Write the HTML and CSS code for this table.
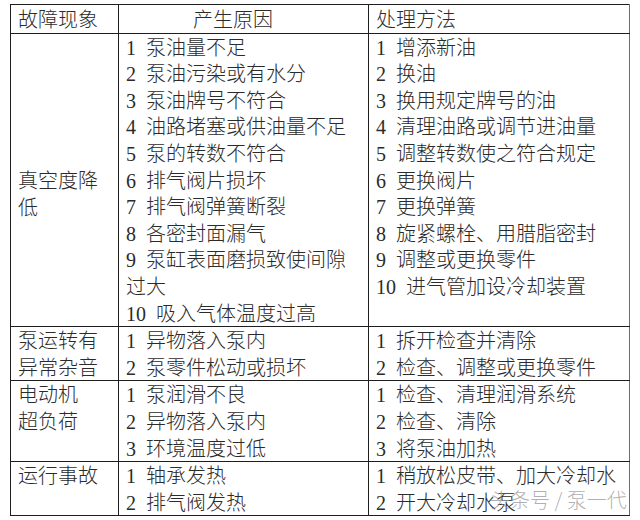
FILE: index.html
```html
<!DOCTYPE html>
<html lang="zh-CN">
<head>
<meta charset="utf-8">
<title>故障现象</title>
<link rel="stylesheet" href="styles.css">
</head>
<body>
<div class="sheet">
  <table class="faults">
    <colgroup>
      <col class="c1">
      <col class="c2">
      <col class="c3">
    </colgroup>
    <thead>
      <tr>
        <th class="h1">故障现象</th>
        <th class="h2">产生原因</th>
        <th class="h3">处理方法</th>
      </tr>
    </thead>
    <tbody>
      <tr>
        <td class="sym mid">真空度降<br>低</td>
        <td>
          <div><span class="n">1</span>泵油量不足</div>
          <div><span class="n">2</span>泵油污染或有水分</div>
          <div><span class="n">3</span>泵油牌号不符合</div>
          <div><span class="n">4</span>油路堵塞或供油量不足</div>
          <div><span class="n">5</span>泵的转数不符合</div>
          <div><span class="n">6</span>排气阀片损坏</div>
          <div><span class="n">7</span>排气阀弹簧断裂</div>
          <div><span class="n">8</span>各密封面漏气</div>
          <div><span class="n">9</span>泵缸表面磨损致使间隙<br>过大</div>
          <div><span class="n">10</span>吸入气体温度过高</div>
        </td>
        <td>
          <div><span class="n">1</span>增添新油</div>
          <div><span class="n">2</span>换油</div>
          <div><span class="n">3</span>换用规定牌号的油</div>
          <div><span class="n">4</span>清理油路或调节进油量</div>
          <div><span class="n">5</span>调整转数使之符合规定</div>
          <div><span class="n">6</span>更换阀片</div>
          <div><span class="n">7</span>更换弹簧</div>
          <div><span class="n">8</span>旋紧螺栓、用腊脂密封</div>
          <div><span class="n">9</span>调整或更换零件</div>
          <div><span class="n">10</span>进气管加设冷却装置</div>
        </td>
      </tr>
      <tr>
        <td class="sym">泵运转有<br>异常杂音</td>
        <td>
          <div><span class="n">1</span>异物落入泵内</div>
          <div><span class="n">2</span>泵零件松动或损坏</div>
        </td>
        <td>
          <div><span class="n">1</span>拆开检查并清除</div>
          <div><span class="n">2</span>检查、调整或更换零件</div>
        </td>
      </tr>
      <tr>
        <td class="sym">电动机<br>超负荷</td>
        <td>
          <div><span class="n">1</span>泵润滑不良</div>
          <div><span class="n">2</span>异物落入泵内</div>
          <div><span class="n">3</span>环境温度过低</div>
        </td>
        <td>
          <div><span class="n">1</span>检查、清理润滑系统</div>
          <div><span class="n">2</span>检查、清除</div>
          <div><span class="n">3</span>将泵油加热</div>
        </td>
      </tr>
      <tr>
        <td class="sym">运行事故</td>
        <td>
          <div><span class="n">1</span>轴承发热</div>
          <div><span class="n">2</span>排气阀发热</div>
        </td>
        <td>
          <div><span class="n">1</span>稍放松皮带、加大冷却水</div>
          <div><span class="n">2</span>开大冷却水泵</div>
        </td>
      </tr>
    </tbody>
  </table>
  <div class="watermark">头条号 / 泵一代</div>
</div>
</body>
</html>
```

FILE: styles.css
```css
html, body {
  margin: 0;
  padding: 0;
  background: #ffffff;
}

body {
  font-family: "Noto Sans CJK SC", "Noto Sans", sans-serif;
  font-weight: 300;
  font-size: 20px;
  color: #2b2b2b;
}

.sheet {
  position: relative;
  padding: 4px 0 0 10px;
  width: 620px;
}

.faults {
  border-collapse: collapse;
  table-layout: fixed;
  width: 619px;
}

.c1 { width: 108px; }
.c2 { width: 250px; }
.c3 { width: 261px; }

.faults th,
.faults td {
  border: 1px solid #1e1e1e;
  padding: 0 4px 0 7px;
  line-height: 26.6px;
  text-align: left;
  vertical-align: top;
  white-space: nowrap;
  font-weight: 300;
}

.faults th {
  padding-top: 1px;
}

.faults tr > :last-child {
  border-right-color: #6e6e6e;
}

.faults .h2 {
  padding-left: 74px;
}

.faults .mid {
  vertical-align: middle;
  padding-top: 28px;
}

.faults td div {
  height: 26.6px;
}

.faults td div:has(br) {
  height: 53.2px;
}

.n {
  font-family: "Liberation Serif", serif;
  font-weight: 400;
  display: inline-block;
  padding-right: 10px;
  line-height: 20px;
}

.watermark {
  position: absolute;
  left: 490px;
  top: 487px;
  font-size: 20px;
  line-height: 26px;
  color: rgba(150, 150, 150, 0.75);
  white-space: nowrap;
}
```
